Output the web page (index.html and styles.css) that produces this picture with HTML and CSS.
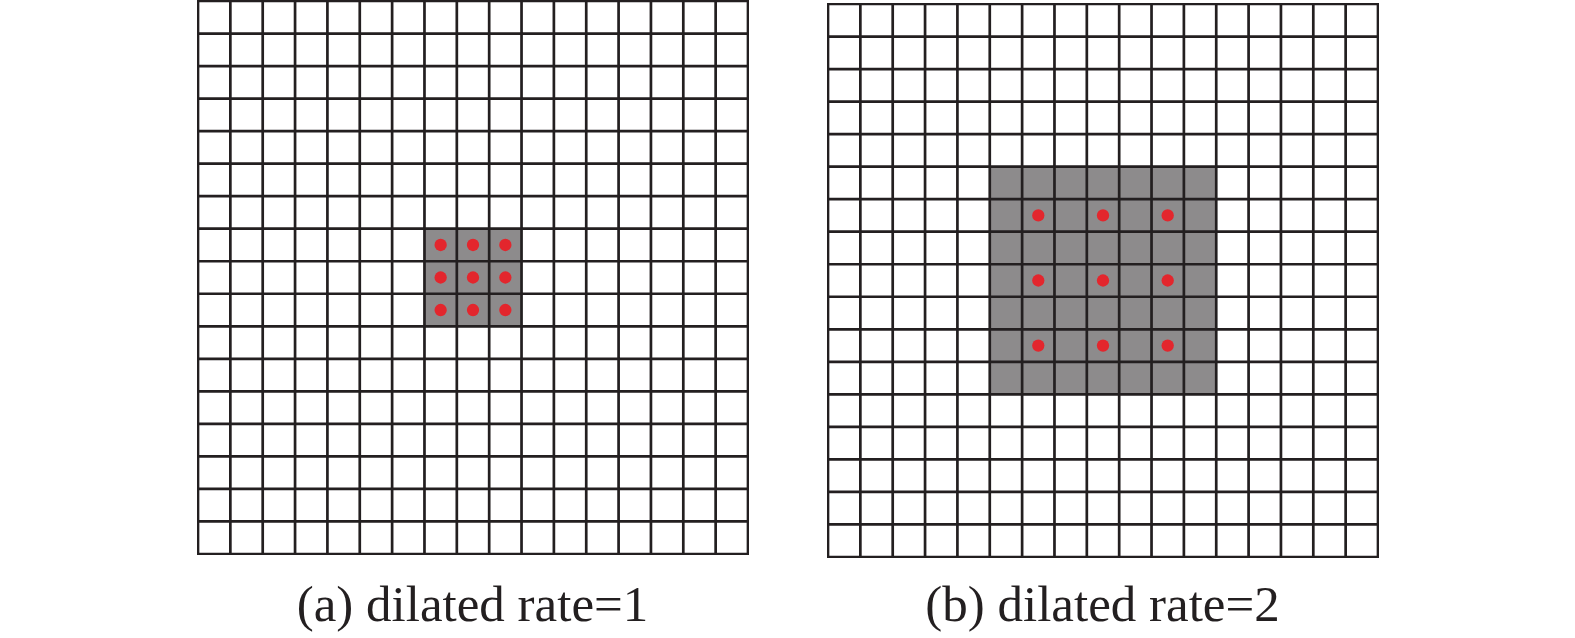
FILE: index.html
```html
<!DOCTYPE html>
<html lang="en">
<head>
<meta charset="utf-8">
<title>Dilated convolution</title>
<link rel="stylesheet" href="styles.css">
</head>
<body>
<div class="figures">
  <figure class="figure figure-a">
    <svg class="grid" width="552" height="555" viewBox="-1 -1 552 555">
      <g transform="scale(32.3529 32.5294)">
        <rect class="field" x="7" y="7" width="3" height="3"/>
        <path class="lines" vector-effect="non-scaling-stroke" d="M0 0V17M1 0V17M2 0V17M3 0V17M4 0V17M5 0V17M6 0V17M7 0V17M8 0V17M9 0V17M10 0V17M11 0V17M12 0V17M13 0V17M14 0V17M15 0V17M16 0V17M17 0V17M0 0H17M0 1H17M0 2H17M0 3H17M0 4H17M0 5H17M0 6H17M0 7H17M0 8H17M0 9H17M0 10H17M0 11H17M0 12H17M0 13H17M0 14H17M0 15H17M0 16H17M0 17H17"/>
        <g class="dots">
          <circle cx="7.5" cy="7.5" r="0.19"/><circle cx="8.5" cy="7.5" r="0.19"/><circle cx="9.5" cy="7.5" r="0.19"/>
          <circle cx="7.5" cy="8.5" r="0.19"/><circle cx="8.5" cy="8.5" r="0.19"/><circle cx="9.5" cy="8.5" r="0.19"/>
          <circle cx="7.5" cy="9.5" r="0.19"/><circle cx="8.5" cy="9.5" r="0.19"/><circle cx="9.5" cy="9.5" r="0.19"/>
        </g>
      </g>
    </svg>
    <figcaption class="caption">(a) dilated rate=1</figcaption>
  </figure>
  <figure class="figure figure-b">
    <svg class="grid" width="552" height="555" viewBox="-1 -1 552 555">
      <g transform="scale(32.3529 32.5294)">
        <rect class="field" x="5" y="5" width="7" height="7"/>
        <path class="lines" vector-effect="non-scaling-stroke" d="M0 0V17M1 0V17M2 0V17M3 0V17M4 0V17M5 0V17M6 0V17M7 0V17M8 0V17M9 0V17M10 0V17M11 0V17M12 0V17M13 0V17M14 0V17M15 0V17M16 0V17M17 0V17M0 0H17M0 1H17M0 2H17M0 3H17M0 4H17M0 5H17M0 6H17M0 7H17M0 8H17M0 9H17M0 10H17M0 11H17M0 12H17M0 13H17M0 14H17M0 15H17M0 16H17M0 17H17"/>
        <g class="dots">
          <circle cx="6.5" cy="6.5" r="0.19"/><circle cx="8.5" cy="6.5" r="0.19"/><circle cx="10.5" cy="6.5" r="0.19"/>
          <circle cx="6.5" cy="8.5" r="0.19"/><circle cx="8.5" cy="8.5" r="0.19"/><circle cx="10.5" cy="8.5" r="0.19"/>
          <circle cx="6.5" cy="10.5" r="0.19"/><circle cx="8.5" cy="10.5" r="0.19"/><circle cx="10.5" cy="10.5" r="0.19"/>
        </g>
      </g>
    </svg>
    <figcaption class="caption">(b) dilated rate=2</figcaption>
  </figure>
</div>
</body>
</html>
```

FILE: styles.css
```css
html, body {
  margin: 0;
  padding: 0;
  background: #ffffff;
}

body {
  width: 1575px;
  height: 638px;
  overflow: hidden;
  font-family: "Liberation Serif", "Times New Roman", serif;
  color: #231f20;
}

.figures {
  display: flex;
  justify-content: center;
  align-items: flex-start;
  gap: 78px;
}

.figure {
  margin: 0;
  display: flex;
  flex-direction: column;
  align-items: center;
}

.grid {
  display: block;
}

.figure-b .grid {
  margin-top: 3px;
}

.field {
  fill: #8d8b8c;
}

.lines {
  fill: none;
  stroke: #231f20;
  stroke-width: 2.7px;
  stroke-linecap: square;
}

.dots circle {
  fill: #e3262d;
}

.caption {
  margin-top: 24px;
  font-size: 51px;
  line-height: 51px;
  white-space: nowrap;
}

.figure-b .caption {
  margin-top: 21px;
}
```
